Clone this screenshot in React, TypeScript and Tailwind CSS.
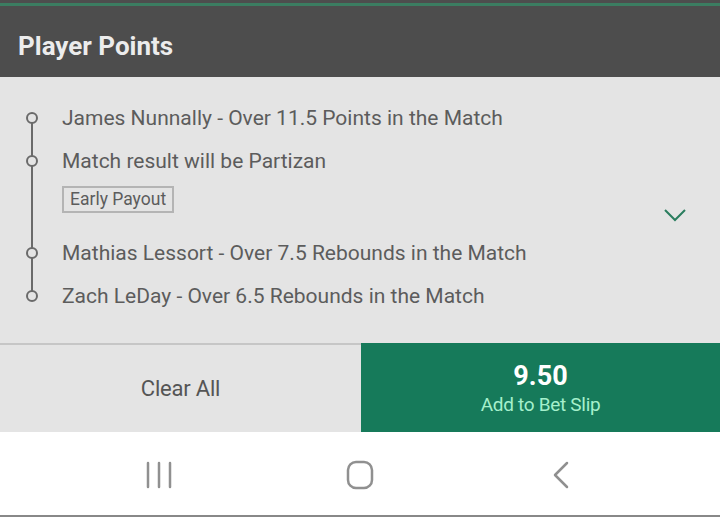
export default function App() {
  const legs = [
    { text: 'James Nunnally - Over 11.5 Points in the Match' },
    { text: 'Match result will be Partizan', tag: 'Early Payout' },
    { text: 'Mathias Lessort - Over 7.5 Rebounds in the Match' },
    { text: 'Zach LeDay - Over 6.5 Rebounds in the Match' },
  ]

  return (
    <div className="w-[720px] h-[517px] flex flex-col bg-white overflow-hidden" style={{ fontFamily: 'Roboto, "Noto Sans", sans-serif' }}>
      {/* header */}
      <div className="h-[77px] bg-[#4d4d4d] flex flex-col">
        <div className="h-[3px]" />
        <div className="h-[3px] bg-[#3b7d61]" />
        <div className="flex-1 flex items-center px-[18px] pt-[9px]">
          <span className="text-[26px] font-bold text-[#ececec]">Player Points</span>
        </div>
      </div>

      {/* legs */}
      <div className="h-[266px] bg-[#e4e4e4] flex">
        <div className="flex-1 pt-[26px] pl-[26px]">
          <div className="relative">
            <div className="absolute left-[5px] top-[15px] bottom-[28px] w-[2px] bg-[#6a6a6a]" />
            {legs.map((leg, i) => (
              <div key={i} className="flex">
                <div className="w-[36px] shrink-0 flex items-start pt-[9px]">
                  <div className="w-[12px] h-[12px] rounded-full border-2 border-[#6a6a6a] bg-[#e4e4e4] relative" />
                </div>
                <div className="pb-[13px]">
                  <div className="text-[21px] leading-[30px] text-[#5c5c5c] whitespace-nowrap">{leg.text}</div>
                  {leg.tag && (
                    <div className="mt-[10px] mb-[12px] inline-block border-2 border-[#b4b4b4] px-[6px] text-[17.5px] leading-[23px] text-[#5c5c5c]">
                      {leg.tag}
                    </div>
                  )}
                </div>
              </div>
            ))}
          </div>
        </div>
        <div className="w-[82px] flex justify-start pt-[131px] pl-[25px]">
          <svg width="24" height="14" viewBox="0 0 24 14" fill="none">
            <path d="M2 2 L12 12 L22 2" stroke="#2a7d5e" strokeWidth="2" />
          </svg>
        </div>
      </div>

      {/* actions */}
      <div className="h-[89px] flex">
        <div className="w-[361px] bg-[#e4e4e4] border-t-2 border-[#c6c6c6] flex items-center justify-center">
          <span className="text-[22px] text-[#555] tracking-[-0.2px]">Clear All</span>
        </div>
        <div className="flex-1 bg-[#167a5a] flex flex-col items-center justify-center pt-[3px]">
          <span className="text-[27px] font-bold text-white leading-[31px]">9.50</span>
          <span className="text-[19px] text-[#a5f0cc] leading-[25px] tracking-[-0.3px]">Add to Bet Slip</span>
        </div>
      </div>

      {/* nav bar */}
      <div className="flex-1 bg-white flex items-center justify-center gap-[171px] pt-[2px] border-b-2 border-[#888]">
        <svg width="30" height="30" viewBox="0 0 30 30">
          <path d="M4 3 V27 M15 3 V27 M26 3 V27" stroke="#909090" strokeWidth="2.5" strokeLinecap="round" />
        </svg>
        <svg width="30" height="30" viewBox="0 0 30 30">
          <rect x="3" y="2" width="24" height="26" rx="8" fill="none" stroke="#909090" strokeWidth="2.5" />
        </svg>
        <svg width="30" height="30" viewBox="0 0 30 30">
          <path d="M21 3 L9 15 L21 27" fill="none" stroke="#909090" strokeWidth="2.5" strokeLinecap="round" strokeLinejoin="round" />
        </svg>
      </div>
    </div>
  )
}
